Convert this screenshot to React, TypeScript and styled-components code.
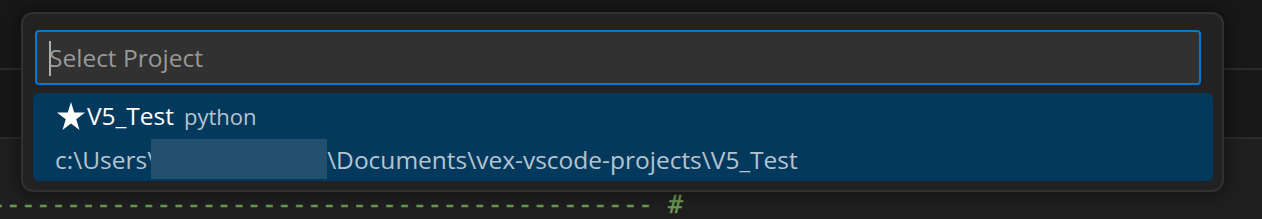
import React from "react";
import styled, { createGlobalStyle } from "styled-components";

const GlobalStyle = createGlobalStyle`
  html, body {
    margin: 0;
    padding: 0;
    background: #1f1f1f;
  }
  body {
    font-family: "Open Sans", "Noto Sans", sans-serif;
    overflow: hidden;
  }
  #root {
    position: relative;
    width: 1262px;
    height: 219px;
    overflow: hidden;
  }
`;

const Workbench = styled.div`
  display: flex;
  flex-direction: column;
  height: 219px;
`;

const TitleBar = styled.div`
  height: 68px;
  background: #181818;
  border-bottom: 2px solid #2b2b2b;
`;

const TabBar = styled.div`
  height: 67px;
  background: #181818;
  border-bottom: 2px solid #2b2b2b;
`;

const Editor = styled.div`
  flex: 1;
  background: #1f1f1f;
  padding-top: 47px;
  overflow: hidden;
`;

const CodeLine = styled.div`
  height: 38px;
  line-height: 38px;
  margin-left: -9.3px;
  font-family: "DejaVu Sans Mono", "Liberation Mono", monospace;
  font-size: 25px;
  color: #6a9955;
  white-space: pre;
  -webkit-text-stroke: 0.4px #6a9955;
`;

const QuickInput = styled.div`
  position: absolute;
  top: 12px;
  left: 21px;
  width: 1203px;
  box-sizing: border-box;
  display: flex;
  flex-direction: column;
  gap: 8px;
  padding: 16px 9px 9px 10px;
  background: #222222;
  border: 2px solid #313131;
  border-radius: 12px;
  box-shadow: 0 0 16px 4px rgba(0, 0, 0, 0.36);
`;

const InputRow = styled.div`
  padding: 0 12px 0 2px;
`;

const InputBox = styled.div`
  display: flex;
  align-items: center;
  height: 55px;
  box-sizing: border-box;
  padding: 1px 0 0 12px;
  background: #313131;
  border: 2px solid #0078d4;
  border-radius: 4px;
`;

const Caret = styled.span`
  width: 2px;
  height: 35px;
  margin-right: -2px;
  background: #aeafad;
`;

const Placeholder = styled.span`
  font-size: 24.5px;
  line-height: 1;
  color: #989898;
`;

const ListItem = styled.div`
  display: flex;
  flex-direction: column;
  height: 88px;
  box-sizing: border-box;
  padding-left: 22px;
  background: #04395e;
  border-radius: 6px;
`;

const ItemRow = styled.div<{ $offset?: number }>`
  display: flex;
  align-items: center;
  height: 44px;
  padding-top: ${(props) => props.$offset || 0}px;
  box-sizing: border-box;
  white-space: pre;
`;

const StarIcon = styled.svg`
  width: 32px;
  height: 32px;
  flex-shrink: 0;
  fill: #ffffff;
`;

const Label = styled.span`
  font-size: 24.5px;
  color: #ffffff;
`;

const Description = styled.span`
  margin-left: 10px;
  font-size: 22px;
  color: #b4c4cf;
`;

const Detail = styled.span`
  display: flex;
  align-items: center;
  font-size: 24.5px;
  color: #b4c4cf;
`;

const Redacted = styled.span`
  display: inline-block;
  width: 176px;
  height: 40px;
  margin-left: -5px;
  background: #24506f;
`;

const App: React.FC = () => {
  return (
    <>
      <GlobalStyle />
      <Workbench>
        <TitleBar />
        <TabBar />
        <Editor>
          <CodeLine>{"-".repeat(44) + " #"}</CodeLine>
        </Editor>
      </Workbench>
      <QuickInput>
        <InputRow>
          <InputBox>
            <Caret />
            <Placeholder>Select Project</Placeholder>
          </InputBox>
        </InputRow>
        <ListItem>
          <ItemRow $offset={1}>
            <StarIcon viewBox="0 0 16 16">
              <path d="M9.595 6.252L8 1 6.405 6.252H1l4.373 3.4L3.75 15 8 11.695 12.25 15l-1.623-5.348L15 6.252H9.595z" />
            </StarIcon>
            <Label>V5_Test</Label>
            <Description>python</Description>
          </ItemRow>
          <ItemRow>
            <Detail>
              {"c:\\Users\\"}
              <Redacted />
              {"\\Documents\\vex-vscode-projects\\V5_Test"}
            </Detail>
          </ItemRow>
        </ListItem>
      </QuickInput>
    </>
  );
};

export default App;
